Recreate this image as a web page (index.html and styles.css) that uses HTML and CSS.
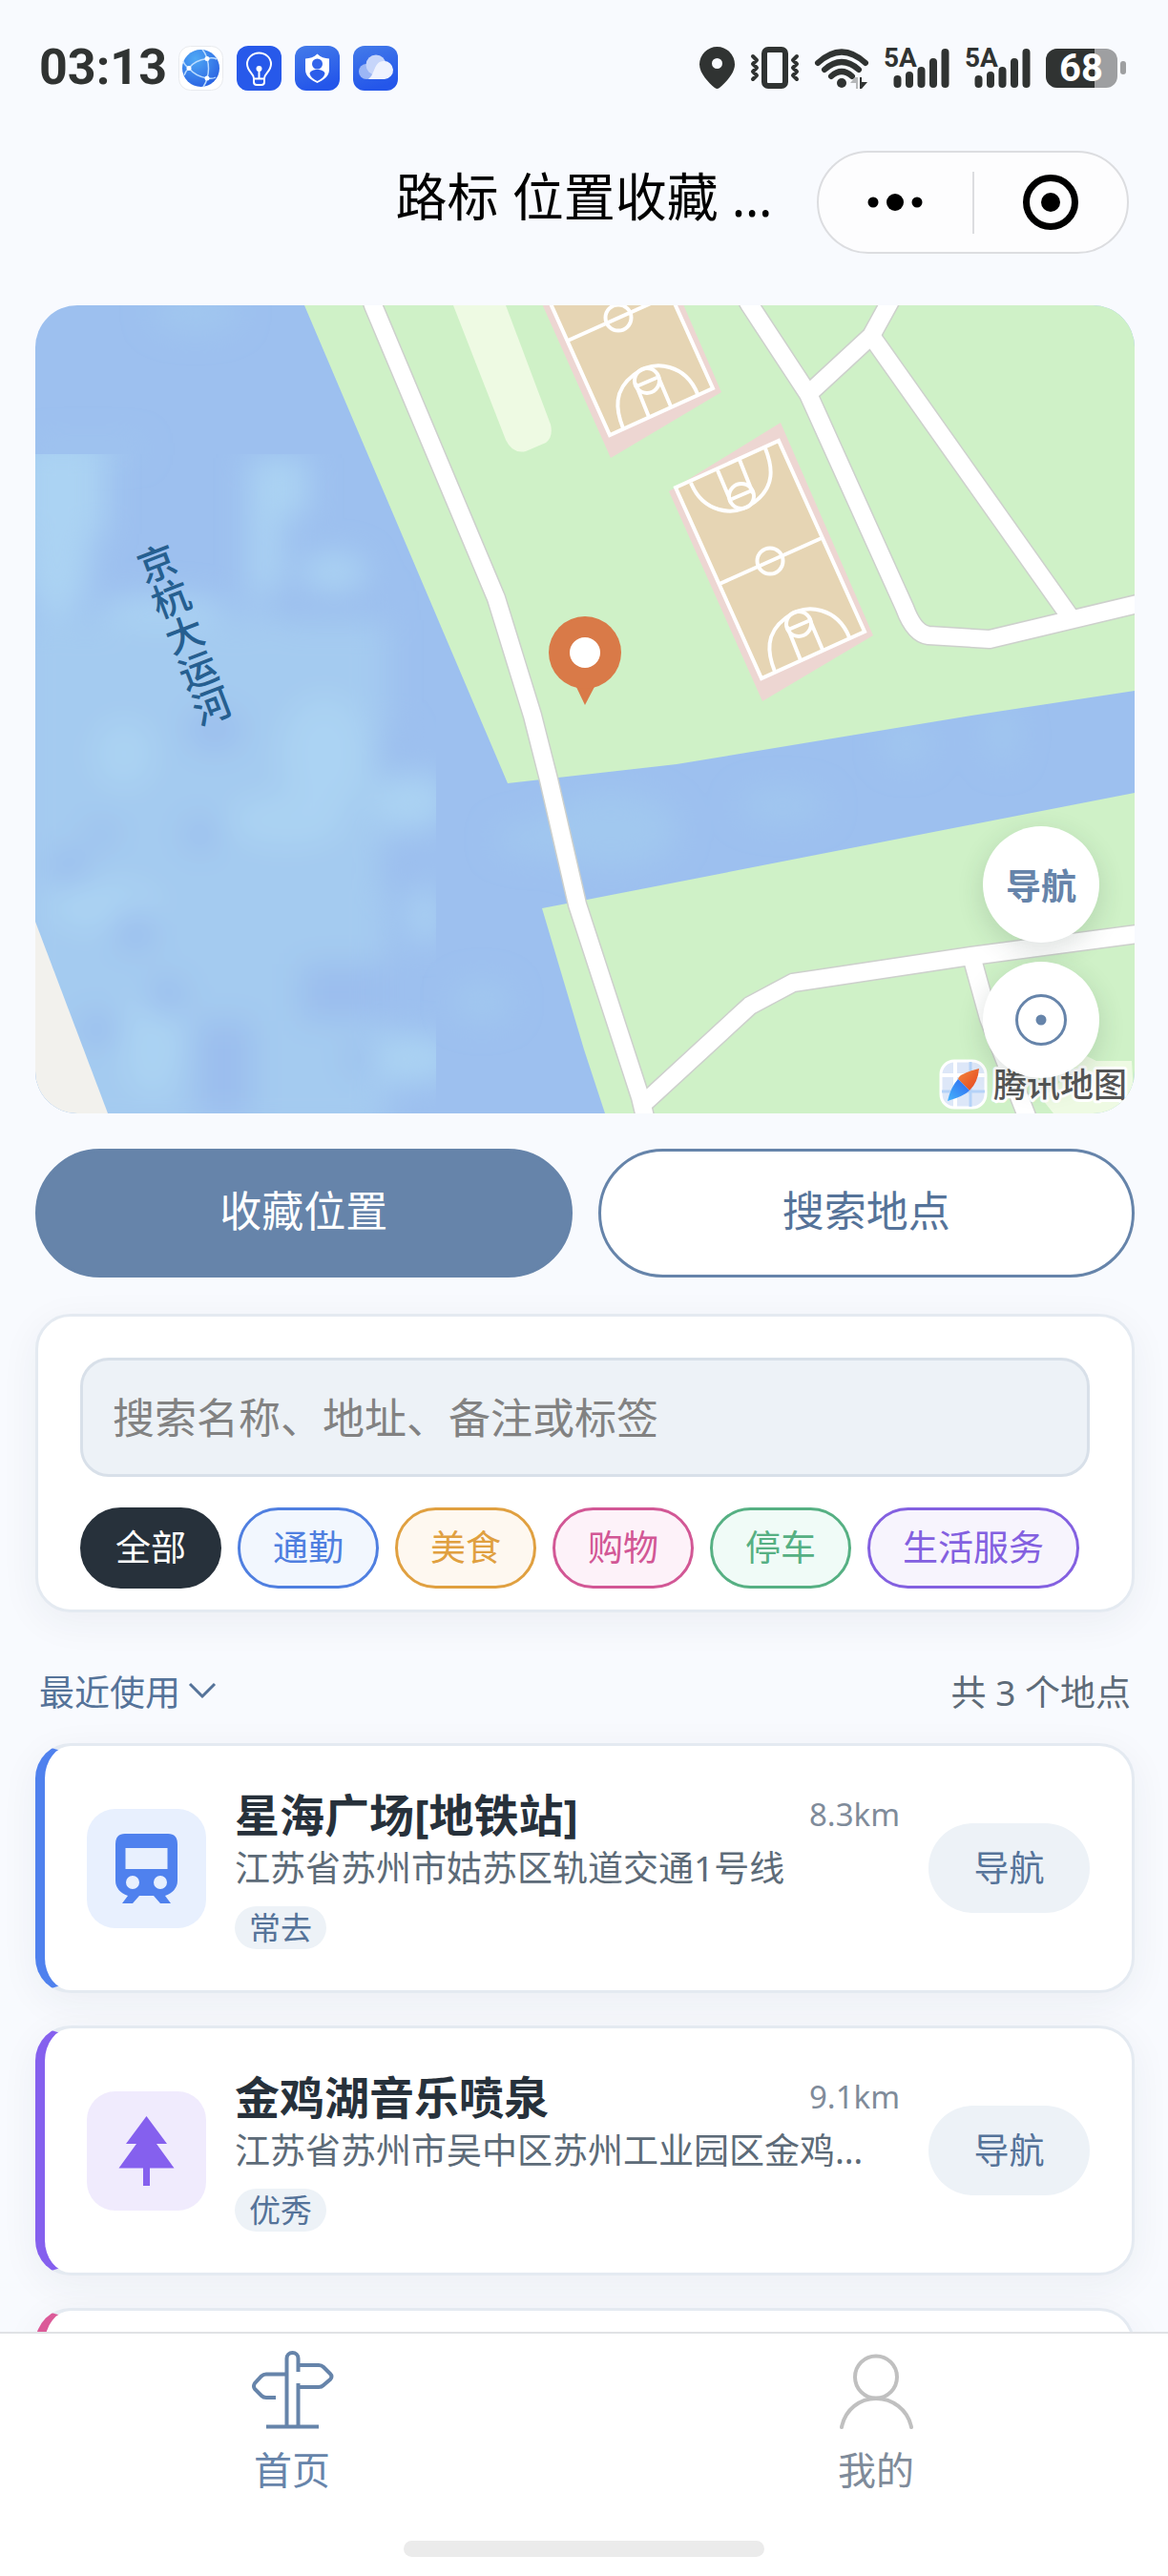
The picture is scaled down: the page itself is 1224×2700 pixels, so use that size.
FILE: index.html
```html
<!DOCTYPE html>
<html lang="zh-CN">
<head>
    <meta charset="UTF-8">
    <meta name="viewport" content="width=device-width, initial-scale=1.0">
    <link rel="stylesheet" href="styles.css">
    <title>路标 位置收藏</title>
</head>
<body>

    <div class="status-bar">
        <span class="clock">03:13</span>
        <div class="status-apps">
            <svg class="app-icon" viewBox="0 0 47 47">
                <defs>
                    <radialGradient id="globe" cx="0.35" cy="0.25" r="0.8">
                        <stop offset="0" stop-color="#4fa9f5"/>
                        <stop offset="1" stop-color="#2a62e2"/>
                    </radialGradient>
                </defs>
                <rect x="0.5" y="0.5" width="46" height="46" rx="12" fill="#fff" stroke="#e8eaee"/>
                <circle cx="23.500" cy="23.500" r="19.500" fill="url(#globe)"/>
                <g fill="none" stroke="#b9dbff" stroke-width="1.500">
                    <path d="M11 23.500Q17 15 30 13.500Q28 7 25 4M30 13.500Q36 12 40 14M30 13.500Q33 24 30 34M11 23.500Q18 32 30 34Q29 39 26 43M30 34Q36 35 39 33M11 23.500Q6 20 5 16M11 23.500Q7 27 6 31"/>
                </g>
                <g fill="#fff"><circle cx="11" cy="23.500" r="2.500"/><circle cx="30" cy="13.500" r="2.500"/><circle cx="30" cy="34" r="2.500"/></g>
            </svg>
            <svg class="app-icon" viewBox="0 0 47 47">
                <rect width="47" height="47" rx="12" fill="#2759ea"/>
                <g fill="none" stroke="#fff" stroke-width="2">
                    <path d="M18 34c0-5-7-7-7-15a12.500 11.500 0 0 1 25 0c0 8-7 10-7 15v4q0 3-3 3h-5q-3 0-3-3zM18 34.500h11M23.500 34V25"/>
                </g>
                <circle cx="23.500" cy="24" r="3" fill="#fff"/>
            </svg>
            <svg class="app-icon" viewBox="0 0 47 47">
                <defs>
                    <linearGradient id="appBlue" x1="0" y1="0" x2="0.3" y2="1">
                        <stop offset="0" stop-color="#447be9"/>
                        <stop offset="1" stop-color="#2456ea"/>
                    </linearGradient>
                </defs>
                <rect width="47" height="47" rx="12" fill="url(#appBlue)"/>
                <path fill="#fff" d="M23.500 8.500C27 12 31 13 36 13.500V25c0 7-6 11-12.500 14C17 36 11 32 11 25V13.500c5-.5 9-1.500 12.500-5z"/>
                <circle cx="23.500" cy="19" r="5.500" fill="#3264ea"/>
                <path fill="#2b5dea" d="M15.500 29c1-3 4-4 8-4s7 1 8 4c-1 4-4 6-8 8-4-2-7-4-8-8z"/>
            </svg>
            <svg class="app-icon" viewBox="0 0 47 47">
                <rect width="47" height="47" rx="12" fill="url(#appBlue)"/>
                <circle cx="14" cy="27" r="8" fill="#9bb6f5"/>
                <circle cx="24" cy="20" r="10.500" fill="#c6d5fa"/>
                <path fill="#eef2fe" d="M15 35c8-2 6-19 17-19a9.500 9.500 0 0 1 1 19z"/>
            </svg>
        </div>
        <div class="status-signals">
            <svg class="pin-mark" viewBox="0 0 37 44">
                <path fill="#303332" fill-rule="evenodd" d="M18.500 0A18.500 18.500 0 0 1 37 18.500C37 28 27 38 21 43q-2.500 2-5 0C10 38 0 28 0 18.500A18.500 18.500 0 0 1 18.500 0zm0 12a5.500 5.500 0 1 0 0 11 5.500 5.500 0 0 0 0-11z"/>
            </svg>
            <svg class="vibrate-mark" viewBox="0 0 52 44">
                <g fill="none" stroke="#303332" stroke-linejoin="round" stroke-linecap="round">
                    <rect x="15" y="3" width="22" height="38" rx="4" stroke-width="6"/>
                    <path stroke-width="4" d="M3 10l4 4-4 4 4 4-4 4 4 4-4 4M49 10l-4 4 4 4-4 4 4 4-4 4 4 4"/>
                </g>
            </svg>
            <svg class="wifi-mark" viewBox="0 0 56 44">
                <g fill="none" stroke="#303332" stroke-width="6" stroke-linecap="round">
                    <path d="M3 17q25-23 50 0M10 24q18-16 36 0M17 31q11-10 22 0"/>
                </g>
                <circle cx="28" cy="38" r="5" fill="#303332"/>
                <path fill="#b5b7b9" d="M37 38l5-6h3v12h-2v-6z"/>
                <path fill="#303332" d="M47 32h2v5h6l-6 7h-2z"/>
            </svg>
            <svg class="signal-mark" viewBox="0 0 69 44">
                <text class="signal-text" x="0" y="21">5A</text>
                <path class="signal-bars" d="M14.500 34v5M27 30v9M39.500 25v14M52 16v23M64.500 6v33"/>
            </svg>
            <svg class="signal-mark" viewBox="0 0 69 44">
                <text class="signal-text" x="0" y="21">5A</text>
                <path class="signal-bars" d="M14.500 34v5M27 30v9M39.500 25v14M52 16v23M64.500 6v33"/>
            </svg>
            <svg class="battery-mark" viewBox="0 0 84 44">
                <rect x="0" y="2" width="75" height="41" rx="12" fill="#9e9fa1"/>
                <path fill="#303332" d="M12 2h39v41H12A12 12 0 0 1 0 31V14A12 12 0 0 1 12 2z"/>
                <rect x="78" y="15" width="6" height="14" rx="3" fill="#9e9fa1"/>
                <text class="battery-text" x="37" y="36" text-anchor="middle">68</text>
            </svg>
        </div>
    </div>

    <header class="nav-bar">
        <h1 class="nav-title">路标 位置收藏 …</h1>
        <div class="capsule">
            <button type="button" class="capsule-button" aria-label="更多">
                <svg class="capsule-icon" viewBox="0 0 60 60"><circle cx="7" cy="30" r="5.500"/><circle cx="30" cy="30" r="9"/><circle cx="53" cy="30" r="5.500"/></svg>
            </button>
            <button type="button" class="capsule-button" aria-label="关闭">
                <svg class="capsule-icon" viewBox="0 0 60 60"><circle cx="30" cy="30" r="25.500" fill="none" stroke="#000" stroke-width="7"/><circle cx="30" cy="30" r="10"/></svg>
            </button>
        </div>
    </header>

    <main class="content">
        <section class="map">
            <svg class="map-canvas" viewBox="37 320 1152 847" preserveAspectRatio="xMidYMid slice">
                <defs>
                    <filter id="soft" x="-50%" y="-50%" width="200%" height="200%"><feGaussianBlur stdDeviation="16"/></filter>
                    <clipPath id="tile"><rect x="37" y="476" width="420" height="691"/></clipPath>
                    <linearGradient id="needleRed" x1="0" y1="0" x2="1" y2="1"><stop offset="0" stop-color="#f3893c"/><stop offset="1" stop-color="#e5421f"/></linearGradient>
                    <linearGradient id="needleBlue" x1="0" y1="1" x2="1" y2="0"><stop offset="0" stop-color="#45b4fb"/><stop offset="1" stop-color="#2d66f0"/></linearGradient>
                    <g id="roads" fill="none" stroke-linejoin="round">
                        <path d="M387 308L391 320L520 627L558 750L575 817L605 948L671 1150L677 1175"/>
                        <path d="M673 1158L786 1054L831 1030L1018 1002L1200 978"/>
                        <path d="M1018 1002L1036 1067L1078 1175"/>
                        <path d="M780 310L786 320L847 413L948 637Q958 664 973 666L1037 670L1200 631"/>
                        <path d="M847 413L913 352L935 312"/>
                        <path d="M913 352L1121 646"/>
                    </g>
                </defs>

                <!-- water -->
                <rect x="37" y="320" width="1152" height="847" fill="#9dc0ef"/>
                <g filter="url(#soft)" fill="#a1c8ef">
                    <ellipse cx="205" cy="328" rx="45" ry="18"/>
                    <rect x="37" y="465" width="110" height="11"/>
                    <ellipse cx="640" cy="870" rx="70" ry="40"/>
                    <ellipse cx="820" cy="845" rx="45" ry="16"/>
                    <ellipse cx="950" cy="780" rx="22" ry="20"/>
                    <ellipse cx="1050" cy="770" rx="14" ry="30"/>
                    <ellipse cx="560" cy="880" rx="40" ry="16"/>
                    <ellipse cx="505" cy="1050" rx="30" ry="20"/>
                </g>
                <g clip-path="url(#tile)">
                    <g filter="url(#soft)">
                        <rect x="20" y="650" width="385" height="540" fill="#a4cbf0"/>
                        <g fill="#abd3f3">
                            <rect x="20" y="460" width="90" height="100"/>
                            <ellipse cx="60" cy="580" rx="35" ry="70"/>
                            <rect x="262" y="480" width="60" height="60"/>
                            <rect x="262" y="500" width="32" height="150"/>
                            <ellipse cx="170" cy="640" rx="70" ry="15"/>
                            <ellipse cx="350" cy="600" rx="35" ry="20"/>
                            <ellipse cx="130" cy="790" rx="30" ry="35"/>
                            <ellipse cx="340" cy="790" rx="45" ry="60"/>
                            <ellipse cx="300" cy="860" rx="60" ry="25"/>
                            <ellipse cx="110" cy="950" rx="60" ry="25"/>
                            <ellipse cx="160" cy="1090" rx="30" ry="60"/>
                            <ellipse cx="430" cy="840" rx="40" ry="30"/>
                            <ellipse cx="445" cy="960" rx="15" ry="30"/>
                            <ellipse cx="430" cy="1110" rx="50" ry="25"/>
                        </g>
                        <g fill="#9bbeee">
                            <ellipse cx="72" cy="908" rx="22" ry="18"/>
                            <ellipse cx="141" cy="976" rx="22" ry="22"/>
                            <ellipse cx="174" cy="1044" rx="22" ry="20"/>
                            <ellipse cx="103" cy="1079" rx="22" ry="18"/>
                            <ellipse cx="107" cy="874" rx="16" ry="14"/>
                            <ellipse cx="210" cy="875" rx="18" ry="18"/>
                            <ellipse cx="225" cy="765" rx="30" ry="22"/>
                            <rect x="205" y="1070" width="60" height="100"/>
                            <rect x="315" y="1010" width="90" height="60"/>
                            <ellipse cx="378" cy="1110" rx="14" ry="20"/>
                            <ellipse cx="415" cy="910" rx="18" ry="25"/>
                            <ellipse cx="412" cy="790" rx="14" ry="30"/>
                            <rect x="270" y="620" width="130" height="26"/>
                        </g>
                    </g>
                </g>

                <!-- land -->
                <path fill="#f2f1ed" d="M37 966L113 1167H37z"/>
                <path fill="#cff1c7" d="M319 320L532 821L709 801L1018 750L1189 724V320z"/>
                <path fill="#cff1c7" d="M568 952L615 943L1189 831V1167H634L612 1100z"/>
                <path fill="#eefae3" d="M475 320H530L577 445Q580 458 572 464L551 473Q537 476 530 461z"/>
                <path fill="#eefae3" d="M1139 1107L1149 1112H1186L1189 1167H1104L1092 1152z"/>

                <!-- basketball courts -->
                <g id="court">
                    <path fill="#edd6d2" d="M818 443L915 666L799 735L701 515z"/>
                    <path fill="#e6d5b4" stroke="#fff" stroke-width="4" d="M816 462L906 662L798 711L708 511z"/>
                    <g fill="none" stroke="#fff" stroke-width="4">
                        <path d="M754 612L861 564"/>
                        <circle cx="807" cy="588" r="13.500"/>
                        <g id="hoop">
                            <path d="M812 704C804 684 802 664 823 648C846 630 878 638 890 668"/>
                            <path d="M839 692L825 657M862 681L848 648M826 660L847 651"/>
                            <circle cx="837" cy="654" r="13"/>
                        </g>
                        <use href="#hoop" transform="rotate(180 807 587)"/>
                    </g>
                </g>
                <use href="#court" x="-159" y="-255"/>

                <!-- grey casing first, white on top -->
                <use href="#roads" class="road-casing"/>
                <use href="#roads" class="road-fill"/>

                <text class="river-name" transform="translate(156 572) rotate(-21)">京杭大运河</text>

                <!-- current place -->
                <path fill="#d97a48" d="M602 716L613 739L625 716z"/>
                <circle cx="613" cy="684" r="38" fill="#d97a48"/>
                <circle cx="613" cy="684" r="16" fill="#fff"/>

                <!-- map vendor -->
                <rect x="986" y="1112" width="47" height="49" rx="14" fill="#dde7f8" stroke="#fff" stroke-width="3"/>
                <path stroke="#fff" stroke-width="4" d="M1001 1113V1160M987 1127H1032"/>
                <path stroke="#b5d3f8" stroke-width="3" d="M1017 1113V1160M987 1144H1032"/>
                <path fill="url(#needleRed)" d="M1026 1120Q1005 1125 1004 1131L1016 1143Q1025 1134 1026 1120z"/>
                <path fill="url(#needleBlue)" d="M1004 1131L1016 1143Q1010 1149 993 1154Q996 1140 1004 1131z"/>
                <text class="vendor-name" x="1041" y="1150">腾讯地图</text>
            </svg>
            <div class="map-actions">
                <button type="button" class="map-button">导航</button>
                <button type="button" class="map-button" aria-label="定位">
                    <svg class="locate-icon" viewBox="0 0 54 54"><circle cx="27" cy="27" r="25.500" fill="none" stroke="#6684aa" stroke-width="3"/><circle cx="27" cy="27" r="5.500" fill="#6684aa"/></svg>
                </button>
            </div>
        </section>

        <div class="actions">
            <button type="button" class="action action-primary">收藏位置</button>
            <button type="button" class="action action-outline">搜索地点</button>
        </div>

        <section class="search-card">
            <input type="text" class="search-input" aria-label="搜索" placeholder="搜索名称、地址、备注或标签">
            <div class="chips">
                <button type="button" class="chip chip-all">全部</button>
                <button type="button" class="chip chip-commute">通勤</button>
                <button type="button" class="chip chip-food">美食</button>
                <button type="button" class="chip chip-shopping">购物</button>
                <button type="button" class="chip chip-parking">停车</button>
                <button type="button" class="chip chip-life">生活服务</button>
            </div>
        </section>

        <div class="list-head">
            <button type="button" class="sort-button">最近使用
                <svg class="chevron" viewBox="0 0 30 18"><path d="M2 2l13 13L28 2" fill="none" stroke="#557399" stroke-width="3"/></svg>
            </button>
            <span class="list-count">共 3 个地点</span>
        </div>

        <div class="place-list">
            <article class="place place-blue">
                <div class="place-icon">
                    <svg class="glyph" viewBox="0 0 73 73">
                        <path fill="#4f81ee" fill-rule="evenodd" d="M14 0h45q10 0 10 11v38q0 11-13 16l6 8H51l-7-8H29l-7 8H11l6-8Q4 60 4 49V11Q4 0 14 0zM14.500 15v22h44V15zM22 44a7 7 0 1 0 0 14 7 7 0 0 0 0-14zM51 44a7 7 0 1 0 0 14 7 7 0 0 0 0-14z"/>
                    </svg>
                </div>
                <div class="place-info">
                    <div class="place-top">
                        <h2 class="place-name">星海广场[地铁站]</h2>
                        <span class="place-distance">8.3km</span>
                    </div>
                    <p class="place-address">江苏省苏州市姑苏区轨道交通1号线</p>
                    <span class="place-tag">常去</span>
                </div>
                <button type="button" class="place-nav">导航</button>
            </article>

            <article class="place place-purple">
                <div class="place-icon">
                    <svg class="glyph" viewBox="0 0 73 73">
                        <path fill="#8560ee" d="M36.500 0L58 29H47L65.500 54.500H40V73H33V54.500H7.500L26 29H15z"/>
                    </svg>
                </div>
                <div class="place-info">
                    <div class="place-top">
                        <h2 class="place-name">金鸡湖音乐喷泉</h2>
                        <span class="place-distance">9.1km</span>
                    </div>
                    <p class="place-address">江苏省苏州市吴中区苏州工业园区金鸡…</p>
                    <span class="place-tag">优秀</span>
                </div>
                <button type="button" class="place-nav">导航</button>
            </article>

            <article class="place place-pink"></article>
        </div>
    </main>

    <nav class="tab-bar">
        <div class="tabs">
            <a href="#" class="tab tab-active">
                <svg class="tab-icon" viewBox="0 0 88 84">
                    <path fill="none" stroke="#6684aa" stroke-width="4" d="M38.500 80V9a6 6 0 0 1 12 0V23M50.500 35V80M17 80.500H72M51 16H72q3 0 5 2l7 7q3 3 0 6l-7 6q-2 2-5 2H51M38 25.500H17q-3 0-5 2L5 35q-2 3 0 6l7 7q2 2 5 2H27"/>
                </svg>
                首页
            </a>
            <a href="#" class="tab">
                <svg class="tab-icon" viewBox="0 0 88 84">
                    <g fill="none" stroke="#c0c0c0" stroke-width="4" stroke-linecap="round"><circle cx="44" cy="28.500" r="22"/><path d="M8 81C12 62 27 51 44 51S77 62 81 81"/></g>
                </svg>
                我的
            </a>
        </div>
        <div class="home-indicator"></div>
    </nav>

</body>
</html>
```
FILE: styles.css
```css
* {
    box-sizing: border-box;
}

body {
    font-family: 'Noto Sans', 'Noto Sans CJK SC', sans-serif;
    background-color: #f8fafe;
    color: #27313b;
    margin: 0;
    height: 100vh;
    display: flex;
    flex-direction: column;
    overflow: hidden;
}

button, input {
    font-family: inherit;
    margin: 0;
}

button {
    border: none;
    padding: 0;
    cursor: pointer;
}

svg {
    display: block;
}

/* status bar */
.status-bar {
    display: flex;
    align-items: center;
    flex-shrink: 0;
    height: 142px;
    padding: 0 44px 0 41px;
    font-family: Roboto, sans-serif;
}

.clock {
    font-size: 52px;
    font-weight: 700;
    line-height: 60px;
    color: #303332;
}

.status-apps {
    display: flex;
    gap: 14px;
    margin-left: 12px;
}

.app-icon {
    width: 47px;
    height: 47px;
}

.status-signals {
    display: flex;
    gap: 16px;
    margin-left: auto;
}

.status-signals svg {
    height: 44px;
    overflow: visible;
}

.pin-mark {
    width: 37px;
}

.vibrate-mark {
    width: 52px;
}

.wifi-mark {
    width: 56px;
}

.signal-mark {
    width: 69px;
}

.battery-mark {
    width: 84px;
}

.signal-text {
    font-size: 28px;
    font-weight: 700;
    fill: #303332;
}

.signal-bars {
    fill: none;
    stroke: #303332;
    stroke-width: 8;
    stroke-linecap: round;
}

.battery-text {
    font-size: 40px;
    font-weight: 700;
    fill: #fff;
}

/* navigation bar */
.nav-bar {
    display: grid;
    grid-template-columns: 1fr auto 1fr;
    flex-shrink: 0;
    height: 108px;
    margin: 16px 0 54px;
}

.nav-title {
    grid-column: 2;
    margin: 0;
    font-size: 54px;
    font-weight: 400;
    line-height: 96px;
    color: #000;
    white-space: nowrap;
}

.capsule {
    display: flex;
    align-items: center;
    justify-self: end;
    width: 327px;
    margin-right: 41px;
    background-color: #fdfdfe;
    border: 2px solid #dcdde0;
    border-radius: 54px;
}

.capsule-button {
    display: flex;
    flex: 1;
    align-items: center;
    justify-content: center;
    height: 65px;
    background: none;
}

.capsule-button + .capsule-button {
    border-left: 2px solid #dcdde0;
}

.capsule-icon {
    width: 60px;
    height: 60px;
}

/* page content */
.content {
    flex: 1;
    min-height: 0;
    padding: 0 35px 0 37px;
    overflow: hidden;
}

.map {
    position: relative;
    border-radius: 44px;
    overflow: hidden;
}

.map-canvas {
    width: 100%;
    height: auto;
}

.road-casing {
    stroke: #cdd0cc;
    stroke-width: 21;
}

.road-fill {
    stroke: #fff;
    stroke-width: 18;
}

.river-name {
    font-size: 40px;
    font-weight: 500;
    fill: #265f90;
    writing-mode: vertical-rl;
}

.vendor-name {
    font-size: 35px;
    font-weight: 500;
    fill: #555;
    stroke: #fff;
    stroke-width: 6;
    stroke-linejoin: round;
    paint-order: stroke;
}

.map-actions {
    position: absolute;
    right: 37px;
    bottom: 37px;
    display: flex;
    flex-direction: column;
    gap: 20px;
}

.map-button {
    display: flex;
    align-items: center;
    justify-content: center;
    width: 122px;
    height: 122px;
    font-size: 37px;
    font-weight: 700;
    color: #6684aa;
    background-color: #fff;
    border-radius: 50%;
    box-shadow: 0 8px 28px rgba(40, 60, 50, 0.16);
}

.locate-icon {
    width: 54px;
    height: 54px;
}

.actions {
    display: flex;
    gap: 27px;
    margin-top: 37px;
}

.action {
    flex: 1;
    height: 135px;
    padding-bottom: 10px;
    font-size: 44px;
    border: 3px solid #6684aa;
    border-radius: 68px;
}

.action-primary {
    color: #fff;
    background-color: #6684aa;
}

.action-outline {
    color: #557399;
    background-color: #fff;
}

/* search and filters */
.search-card {
    margin-top: 38px;
    padding: 43px 44px 22px;
    background-color: #fff;
    border: 3px solid #e4eaf1;
    border-radius: 37px;
    box-shadow: 0 10px 40px rgba(40, 50, 70, 0.06);
}

.search-input {
    display: block;
    width: 100%;
    height: 125px;
    padding: 0 31px;
    font-size: 44px;
    color: #27313b;
    background-color: #edf2f7;
    border: 3px solid #d8e0e9;
    border-radius: 30px;
}

.search-input::placeholder {
    color: #828282;
}

.chips {
    display: flex;
    gap: 17px;
    margin-top: 32px;
}

.chip {
    height: 85px;
    padding: 0 34px 6px;
    font-size: 37px;
    white-space: nowrap;
    border: 3px solid;
    border-radius: 43px;
}

.chip-all {
    color: #fff;
    background-color: #27313b;
    border-color: #27313b;
}

.chip-commute {
    color: #4f7fe0;
    background-color: #f2f7fe;
}

.chip-food {
    color: #e0a040;
    background-color: #fef8f0;
}

.chip-shopping {
    color: #d25795;
    background-color: #fdf2f9;
}

.chip-parking {
    color: #56b083;
    background-color: #f0fbf7;
}

.chip-life {
    color: #8360e0;
    background-color: #f7f4fd;
}

/* saved places */
.list-head {
    display: flex;
    align-items: center;
    justify-content: space-between;
    height: 56px;
    margin: 54px 4px 27px;
    font-size: 37px;
}

.sort-button {
    display: flex;
    align-items: center;
    gap: 8px;
    font-size: 37px;
    color: #557399;
    background: none;
}

.chevron {
    width: 30px;
    height: 18px;
}

.list-count {
    color: #5d6b78;
}

.place-list {
    display: flex;
    flex-direction: column;
    gap: 34px;
}

.place {
    display: flex;
    align-items: center;
    gap: 30px;
    min-height: 262px;
    padding: 0 44px;
    background-color: #fff;
    border: 3px solid #e4eaf1;
    border-left-width: 10px;
    border-radius: 37px;
    box-shadow: 0 10px 40px rgba(40, 50, 70, 0.06);
}

.place-blue {
    border-left-color: #4f81ee;
}

.place-purple {
    border-left-color: #8560ee;
}

.place-pink {
    border-left-color: #db5a98;
}

.place-icon {
    display: flex;
    align-items: center;
    justify-content: center;
    flex-shrink: 0;
    width: 125px;
    height: 125px;
    background-color: #e8f0fe;
    border-radius: 30px;
}

.place-purple .place-icon {
    background-color: #f0ebfd;
}

.glyph {
    width: 73px;
    height: 73px;
}

.place-info {
    flex: 1;
    min-width: 0;
}

.place-top {
    display: flex;
    align-items: center;
    justify-content: space-between;
}

.place-name {
    margin: 0;
    font-size: 47px;
    font-weight: 700;
    line-height: 56px;
}

.place-distance {
    font-size: 33px;
    line-height: 56px;
    color: #7f8b9a;
}

.place-address {
    margin: 3px 0 15px;
    font-size: 37px;
    line-height: 50px;
    color: #5d6b78;
    white-space: nowrap;
    overflow: hidden;
    text-overflow: ellipsis;
}

.place-tag {
    display: block;
    width: fit-content;
    padding: 0 15px;
    font-size: 33px;
    line-height: 45px;
    color: #557399;
    background-color: #edf2f7;
    border-radius: 23px;
}

.place-nav {
    flex-shrink: 0;
    width: 169px;
    height: 94px;
    padding-bottom: 4px;
    font-size: 37px;
    color: #557399;
    background-color: #edf2f7;
    border-radius: 47px;
}

/* bottom tabs */
.tab-bar {
    position: relative;
    flex-shrink: 0;
    padding: 17px 0 20px;
    background-color: #fff;
    border-top: 2px solid #e0e2e5;
}

.tabs {
    display: flex;
}

.tab {
    display: flex;
    flex: 1;
    flex-direction: column;
    align-items: center;
    gap: 18px;
    font-size: 40px;
    line-height: 48px;
    color: #7f8b9a;
    text-decoration: none;
}

.tab-active {
    color: #6684aa;
}

.tab-icon {
    width: 88px;
    height: 84px;
}

.home-indicator {
    width: 378px;
    height: 17px;
    margin: 50px auto 0;
    background-color: #ebebeb;
    border-radius: 9px;
}
```
